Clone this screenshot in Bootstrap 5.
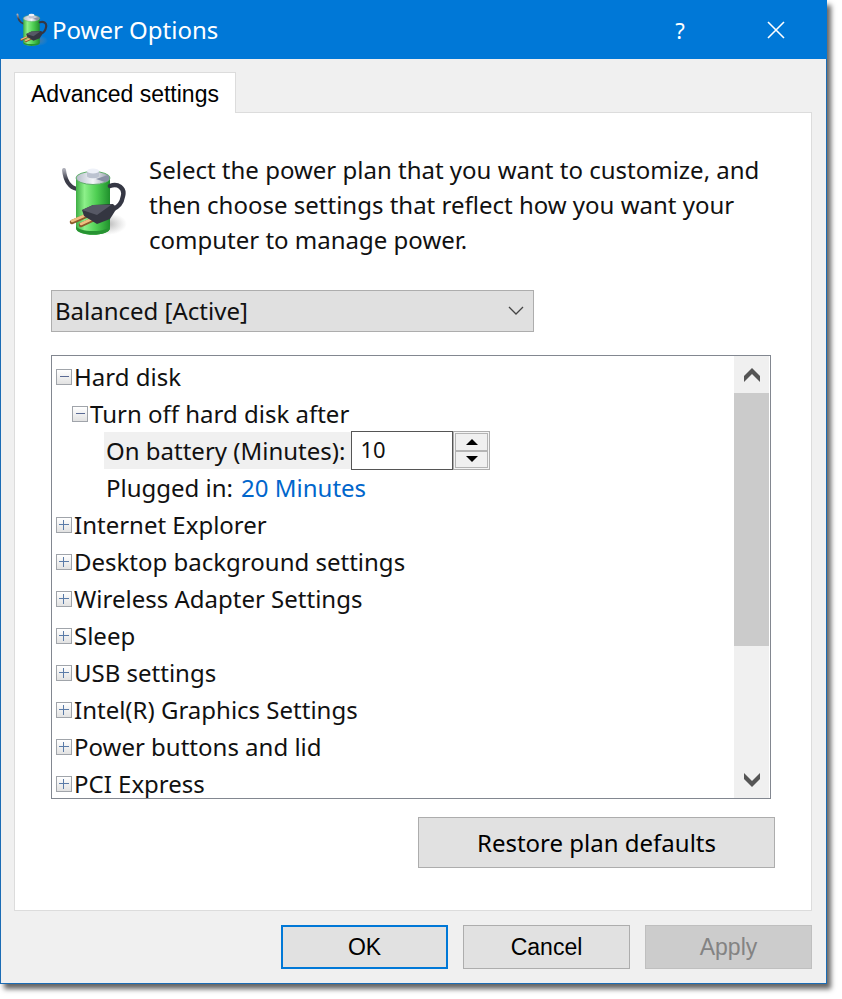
<!DOCTYPE html>
<html lang="en">
<head>
<meta charset="utf-8">
<meta name="viewport" content="width=device-width, initial-scale=1">
<title>Power Options</title>
<link href="https://cdn.jsdelivr.net/npm/bootstrap@5.3.0/dist/css/bootstrap.min.css" rel="stylesheet">
<style>
  body { font-family: "Noto Sans", "Open Sans", sans-serif; font-size: 24px; line-height: 35px; color: #111; background: #fff; }
  .page-pad { padding: 0 15px 15px 0; }
  .dialog { background: #f0f0f0; border: 1px solid #1b6cb5; box-shadow: 4px 5px 5px #666; }
  .titlebar { background: #0078d7; color: #fff; height: 59px; margin: -1px -1px 0; padding: 0 33px 0 16px; }
  .titlebar h1 { font-size: 24px; line-height: 35px; font-weight: 400; }
  .caption-btn { width: 36px; height: 36px; padding: 0; border: 0; background: none; color: #fff; font-size: 22px; line-height: 32px; }
  .caption-gap { gap: 60px; }
  .classic { font-family: "Liberation Sans", Arial, sans-serif; font-size: 23px; line-height: 30px; }
  .dialog-body { padding: 13px 14px 14px 13px; }
  .tabs { margin-bottom: -1px; }
  .tabs .nav-link { position: relative; height: 41px; padding: 6px 16px 0; color: #000; background: #fff; border: 1px solid #dcdcdc; border-bottom: 0; }
  .panel { background: #fff; border: 1px solid #dcdcdc; padding: 39px 36px 42px; }
  .intro { gap: 22px; padding-left: 10px; margin-bottom: 33px; }
  .intro svg { margin-top: 14px; }
  .plan { height: 42px; padding: 0 36px 0 3px; font-size: 24px; line-height: 40px; color: #111; border: 1px solid #adadad; border-radius: 0; background-color: #e0e0e0; background-position: right 9px center; background-size: 16px 16px;
    --bs-form-select-bg-img: url("data:image/svg+xml,%3Csvg xmlns='http://www.w3.org/2000/svg' viewBox='0 0 16 16'%3E%3Cpath d='M1 4l7 7 7-7' fill='none' stroke='%23444' stroke-width='1.3'/%3E%3C/svg%3E");
    background-image: var(--bs-form-select-bg-img); }
  .tree-frame { height: 444px; border: 1px solid #828790; margin: 23px 4px 18px 0; }
  .tree { padding: 2px 0 0 4px; overflow: hidden; }
  .tree ul { list-style: none; padding-left: 16px; margin: 0; }
  .tree ul ul { padding-left: 32px; }
  .tree-row { height: 37px; gap: 2px; white-space: nowrap; }
  .toggle { width: 16px; height: 16px; padding: 0; border: 1px solid #a0a4aa; background: linear-gradient(#fff, #e2e2e2); line-height: 0; }
  .toggle svg { display: block; }
  .setting { height: 37px; line-height: 37px; padding: 0 6px 0 2px; background: #f0f0f0; }
  .plug { padding-left: 2px; }
  .minutes { width: 102px; height: 39px; padding: 0 8px 3px; border: 1px solid #555; font-size: 22px; color: #111; background: #fff; }
  .spin { width: 37px; height: 39px; padding: 1px; border: 1px solid #adadad; background: #f4f4f4; }
  .spin button { flex: 1; padding: 0; border: 1px solid #b4b4b4; background: #f0f0f0; line-height: 0; }
  .value-link { color: #0066cc; text-decoration: none; }
  .scroller { width: 36px; background: #f0f0f0; border-right: 1px solid #fff; }
  .scroller button { height: 37px; padding: 0; border: 0; background: none; line-height: 0; }
  .thumb { height: 253px; background: #cbcbcb; }
  .push { color: #000; background: #e1e1e1; border: 1px solid #adadad; padding: 0; }
  .push-wide { width: 357px; height: 51px; }
  .push-std { width: 167px; height: 44px; }
  .push-default { border: 2px solid #0078d7; }
  .push:disabled { color: #838383; background: #cccccc; border-color: #bfbfbf; }
  .footer-row { gap: 15px; margin-top: 14px; }
</style>
</head>
<body>
<svg width="0" height="0" class="position-absolute" aria-hidden="true">
  <defs>
    <linearGradient id="cell" x1="0" x2="1"><stop offset="0" stop-color="#3fae45"/><stop offset=".25" stop-color="#8df08a"/><stop offset=".6" stop-color="#4fcf53"/><stop offset="1" stop-color="#1f8f2c"/></linearGradient>
    <linearGradient id="metal" x1="0" x2="1"><stop offset="0" stop-color="#b4bcc8"/><stop offset=".5" stop-color="#f4f6fa"/><stop offset="1" stop-color="#8d95a3"/></linearGradient>
    <linearGradient id="cord" x1="0" y1="0" x2="0" y2="1"><stop offset="0" stop-color="#a9aab4"/><stop offset=".5" stop-color="#3c3d49"/></linearGradient>
    <radialGradient id="shade"><stop offset="0" stop-color="#777" stop-opacity=".55"/><stop offset="1" stop-color="#999" stop-opacity="0"/></radialGradient>
    <symbol id="battery" viewBox="0 0 66 72">
      <ellipse cx="46" cy="58" rx="20" ry="11" fill="url(#shade)"/>
      <path d="M3 4c1 9 4 17 13 19" fill="none" stroke="url(#cord)" stroke-width="4" stroke-linecap="round"/>
      <path d="M15 12v50c0 9 34 9 34 0V12z" fill="url(#cell)"/>
      <path d="M15 59v3c0 9 34 9 34 0v-3c0 8-34 8-34 0z" fill="#279332"/>
      <ellipse cx="32" cy="12" rx="17" ry="6.500" fill="url(#metal)" stroke="#5fae6a"/>
      <path d="M26 5v5c0 3 12 3 12 0V5z" fill="#bcc3d0"/>
      <ellipse cx="32" cy="5" rx="6" ry="2.500" fill="#eef1f8"/>
      <path d="M35 13l12-4c2 3 1 6-3 7z" fill="#8991a5"/>
      <path d="M49 20c8-3 15 2 13 10-1 6-4 11-10 13" fill="none" stroke="#353744" stroke-width="4.500" stroke-linecap="round"/>
      <path d="M25 50l-14 6M33 53l-13 6" stroke="#8c5a2b" stroke-width="4.500" stroke-linecap="round"/>
      <path d="M25 49l-14 6M33 52l-13 6" stroke="#f0bd80" stroke-width="2.500" stroke-linecap="round"/>
      <path d="M21 44l11-5 20-1 4 4-7 11-13 5-13-8z" fill="#343641"/>
      <path d="M21 44l11-5 18 0-14 10z" fill="#565865"/>
    </symbol>
  </defs>
</svg>

<div class="page-pad">
<main class="dialog">
  <header class="titlebar d-flex align-items-center">
    <svg width="32" height="36" class="flex-shrink-0 me-1" aria-hidden="true"><use href="#battery"/></svg>
    <h1 class="mb-0 flex-grow-1">Power Options</h1>
    <div class="d-flex caption-gap">
      <button type="button" class="caption-btn" aria-label="Help">?</button>
      <button type="button" class="caption-btn" aria-label="Close"><svg class="d-block mx-auto" width="18" height="18" viewBox="0 0 18 18"><path d="M1 1l16 16M17 1L1 17" stroke="#fff" stroke-width="1.600"/></svg></button>
    </div>
  </header>

  <div class="dialog-body">
    <ul class="nav tabs classic">
      <li class="nav-item"><a class="nav-link active" href="#advanced" aria-current="page">Advanced settings</a></li>
    </ul>
    <section class="panel" id="advanced">
      <div class="intro d-flex align-items-start">
        <svg width="66" height="72" class="flex-shrink-0" aria-hidden="true"><use href="#battery"/></svg>
        <p class="mb-0">Select the power plan that you want to customize, and then choose settings that reflect how you want your computer to manage power.</p>
      </div>

      <div class="row g-0">
        <div class="col-8">
          <select class="form-select plan" aria-label="Power plan"><option>Balanced [Active]</option></select>
        </div>
      </div>

      <div class="tree-frame d-flex">
        <div class="tree flex-grow-1">
          <div class="tree-row d-flex align-items-center"><button type="button" class="toggle" aria-label="Collapse Hard disk"><svg width="14" height="14"><path d="M3 6.500h9" stroke="#5a6a94"/></svg></button><span>Hard disk</span></div>
          <ul>
            <li>
              <div class="tree-row d-flex align-items-center"><button type="button" class="toggle" aria-label="Collapse Turn off hard disk after"><svg width="14" height="14"><path d="M3 6.500h9" stroke="#5a6a94"/></svg></button><span>Turn off hard disk after</span></div>
              <ul>
                <li class="tree-row d-flex align-items-center gap-0">
                  <label class="setting" for="minutes">On battery (Minutes):</label>
                  <input class="minutes" id="minutes" type="text" value="10">
                  <div class="spin d-flex flex-column">
                    <button type="button" aria-label="Increase"><svg width="12" height="6"><path d="M6 0l6 6H0z"/></svg></button>
                    <button type="button" aria-label="Decrease"><svg width="12" height="6"><path d="M0 0h12L6 6z"/></svg></button>
                  </div>
                </li>
                <li class="tree-row d-flex align-items-center gap-2"><span class="plug">Plugged in:</span><a class="value-link" href="#plugged">20 Minutes</a></li>
              </ul>
            </li>
          </ul>
          <div class="tree-row d-flex align-items-center"><button type="button" class="toggle" aria-label="Expand Internet Explorer"><svg width="14" height="14"><path d="M2 6.500h10M6.500 2v10" stroke="#5a7ba8"/></svg></button><span>Internet Explorer</span></div>
          <div class="tree-row d-flex align-items-center"><button type="button" class="toggle" aria-label="Expand Desktop background settings"><svg width="14" height="14"><path d="M2 6.500h10M6.500 2v10" stroke="#5a7ba8"/></svg></button><span>Desktop background settings</span></div>
          <div class="tree-row d-flex align-items-center"><button type="button" class="toggle" aria-label="Expand Wireless Adapter Settings"><svg width="14" height="14"><path d="M2 6.500h10M6.500 2v10" stroke="#5a7ba8"/></svg></button><span>Wireless Adapter Settings</span></div>
          <div class="tree-row d-flex align-items-center"><button type="button" class="toggle" aria-label="Expand Sleep"><svg width="14" height="14"><path d="M2 6.500h10M6.500 2v10" stroke="#5a7ba8"/></svg></button><span>Sleep</span></div>
          <div class="tree-row d-flex align-items-center"><button type="button" class="toggle" aria-label="Expand USB settings"><svg width="14" height="14"><path d="M2 6.500h10M6.500 2v10" stroke="#5a7ba8"/></svg></button><span>USB settings</span></div>
          <div class="tree-row d-flex align-items-center"><button type="button" class="toggle" aria-label="Expand Intel(R) Graphics Settings"><svg width="14" height="14"><path d="M2 6.500h10M6.500 2v10" stroke="#5a7ba8"/></svg></button><span>Intel(R) Graphics Settings</span></div>
          <div class="tree-row d-flex align-items-center"><button type="button" class="toggle" aria-label="Expand Power buttons and lid"><svg width="14" height="14"><path d="M2 6.500h10M6.500 2v10" stroke="#5a7ba8"/></svg></button><span>Power buttons and lid</span></div>
          <div class="tree-row d-flex align-items-center"><button type="button" class="toggle" aria-label="Expand PCI Express"><svg width="14" height="14"><path d="M2 6.500h10M6.500 2v10" stroke="#5a7ba8"/></svg></button><span>PCI Express</span></div>
        </div>
        <div class="scroller d-flex flex-column flex-shrink-0">
          <button type="button" aria-label="Scroll up"><svg width="16" height="14" viewBox="0 0 16 14"><path d="M8 0l8 8v6L8 6l-8 8V8z" fill="#555"/></svg></button>
          <div class="thumb"></div>
          <button type="button" class="mt-auto" aria-label="Scroll down"><svg width="16" height="14" viewBox="0 0 16 14"><path d="M8 14l8-8V0L8 8 0 0v6z" fill="#555"/></svg></button>
        </div>
      </div>

      <div class="d-flex justify-content-end">
        <button type="button" class="push push-wide">Restore plan defaults</button>
      </div>
    </section>

    <footer class="footer-row classic d-flex justify-content-end">
      <button type="button" class="push push-std push-default">OK</button>
      <button type="button" class="push push-std">Cancel</button>
      <button type="button" class="push push-std" disabled>Apply</button>
    </footer>
  </div>
</main>
</div>
<script src="https://cdn.jsdelivr.net/npm/bootstrap@5.3.0/dist/js/bootstrap.bundle.min.js"></script>
</body>
</html>
